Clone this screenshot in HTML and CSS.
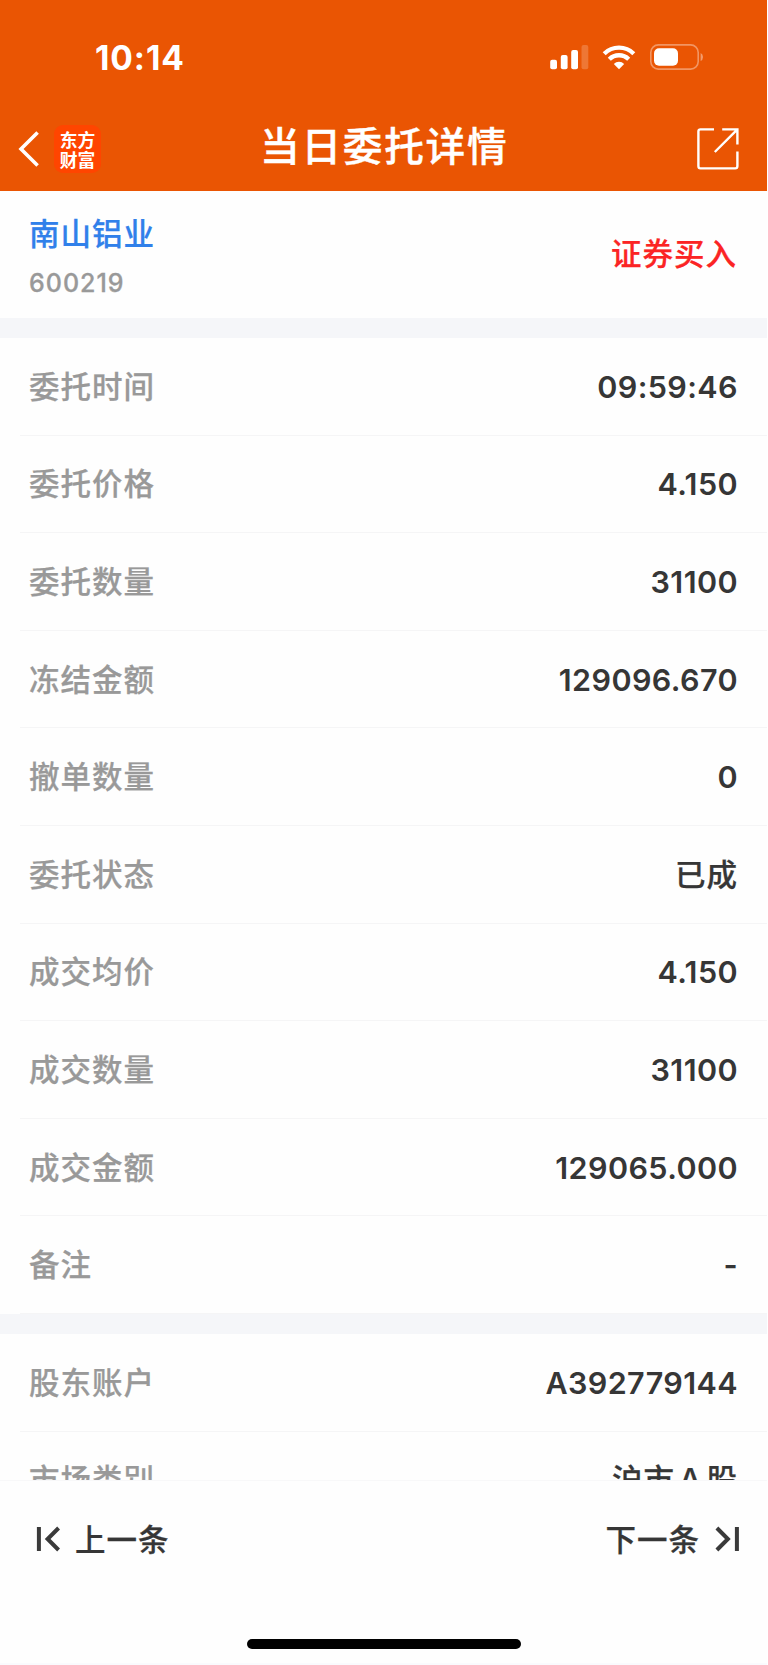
FILE: index.html
```html
<!DOCTYPE html>
<html lang="zh-CN">
<head>
<meta charset="utf-8">
<title>当日委托详情</title>
<link rel="stylesheet" href="styles.css">
</head>
<body>
<div class="app">
  <header class="header">
    <div class="status">
      <span class="clock">10:14</span>
      <svg class="status-icons" width="154" height="26" viewBox="0 0 154 26">
        <g fill="#fff">
          <rect x="0.2" y="15.7" width="6.8" height="9.6" rx="2"/>
          <rect x="10.8" y="11" width="6.8" height="14.3" rx="2"/>
          <rect x="21.2" y="6" width="6.8" height="19.3" rx="2"/>
          <rect x="31.5" y="1" width="6.8" height="24.3" rx="2" opacity=".2"/>
          <path d="M69 25.2 L63.8 20 A7.4 7.4 0 0 1 74.2 20 Z"/>
        </g>
        <path d="M59.3 15.3 A13.7 13.7 0 0 1 78.7 15.3 M54.2 9.7 A21.3 21.3 0 0 1 83.8 9.7" fill="none" stroke="#fff" stroke-width="4.3"/>
        <rect x="100.8" y="0.9" width="47.4" height="24.2" rx="7.6" fill="none" stroke="#fff" stroke-opacity=".38" stroke-width="1.6"/>
        <rect x="104" y="4.2" width="24" height="17.6" rx="5" fill="#fff"/>
        <path d="M150.6 9 Q153 10 153 13 Q153 16 150.6 17 Z" fill="#fff" opacity=".42"/>
      </svg>
    </div>
    <div class="nav">
      <svg class="back" width="22" height="38" viewBox="0 0 22 38"><path d="M19.6 2.5 3 19 19.6 35.6" fill="none" stroke="#fff" stroke-width="3.6"/></svg>
      <div class="logo">东方<br>财富</div>
      <h1 class="title">当日委托详情</h1>
      <svg class="share" width="42" height="42" viewBox="0 0 42 42" fill="none" stroke="#fff" stroke-width="2.4"><path d="M17 1.4H3.4Q1.4 1.4 1.4 3.4V38Q1.4 40.4 3.4 40.4H38.2Q40.4 40.4 40.4 38V23.6M25.2 1.4H40.4V16.6M40.4 1.4 17.8 24"/></svg>
    </div>
  </header>
  <main class="content">
    <section class="stock">
      <div>
        <div class="name">南山铝业</div>
        <div class="code">600219</div>
      </div>
      <div class="side">证券买入</div>
    </section>
    <section class="group">
      <div class="row"><span class="label">委托时间</span><span class="value">09:59:46</span></div>
      <div class="row"><span class="label">委托价格</span><span class="value">4.150</span></div>
      <div class="row"><span class="label">委托数量</span><span class="value">31100</span></div>
      <div class="row"><span class="label">冻结金额</span><span class="value">129096.670</span></div>
      <div class="row"><span class="label">撤单数量</span><span class="value">0</span></div>
      <div class="row"><span class="label">委托状态</span><span class="value cjk">已成</span></div>
      <div class="row"><span class="label">成交均价</span><span class="value">4.150</span></div>
      <div class="row"><span class="label">成交数量</span><span class="value">31100</span></div>
      <div class="row"><span class="label">成交金额</span><span class="value">129065.000</span></div>
      <div class="row"><span class="label">备注</span><span class="value">-</span></div>
    </section>
    <section class="group">
      <div class="row"><span class="label">股东账户</span><span class="value">A392779144</span></div>
      <div class="row"><span class="label">市场类别</span><span class="value cjk">沪市Ａ股</span></div>
    </section>
  </main>
  <footer class="footer">
    <div class="pager">
      <div class="page-btn">
        <svg width="24" height="26" viewBox="0 0 24 26" fill="none" stroke="#3a3a3a" stroke-width="4"><path d="M2.9 1V25M22.6 2 11.6 13 22.6 24"/></svg>
        <span>上一条</span>
      </div>
      <div class="page-btn next">
        <span>下一条</span>
        <svg width="24" height="26" viewBox="0 0 24 26" fill="none" stroke="#3a3a3a" stroke-width="4"><path d="M21.9 1V25M1.9 2 12.9 13 1.9 24"/></svg>
      </div>
    </div>
    <div class="home-bar"></div>
  </footer>
</div>
</body>
</html>
```

FILE: styles.css
```css
* { box-sizing: border-box; }
body {
  margin: 0;
  background: #fff;
  font-family: "Noto Sans CJK SC", sans-serif;
  font-weight: 500;
}
.app {
  width: 767px;
  height: 1665px;
  display: flex;
  flex-direction: column;
  overflow: hidden;
  background: #fefefe;
  border-bottom: 2px solid #fafafd;
}
.header {
  flex: none;
  height: 191px;
  background: #ea5503;
  color: #fff;
}
.status {
  height: 114px;
  padding: 0 63px 0 95px;
  display: flex;
  justify-content: space-between;
  align-items: center;
}
.clock {
  margin-top: 2px;
  font: 700 33.5px/40px Inter, sans-serif;
  letter-spacing: .9px;
}
.status-icons { display: block; }
.nav {
  height: 68px;
  padding: 0 28px 0 18px;
  display: grid;
  grid-template-columns: 36px 206px 1fr 42px;
  align-items: center;
}
.logo {
  width: 47px;
  height: 48px;
  border-radius: 9px;
  background: #ff4500;
  padding-top: 4px;
  text-align: center;
  font: 700 17.8px/20px "Noto Sans CJK SC", sans-serif;
}
.title {
  margin: 0 0 10px;
  font-size: 39.7px;
  line-height: 59px;
  font-weight: 500;
  letter-spacing: 1.7px;
  white-space: nowrap;
  -webkit-text-stroke: .4px currentColor;
}
.content {
  flex: none;
  height: 1290px;
  overflow: hidden;
  border-bottom: 1px solid #f8f8f9;
}
.stock {
  height: 127px;
  padding: 0 29px;
  display: flex;
  justify-content: space-between;
  align-items: center;
}
.name, .side, .label, .value, .page-btn {
  font-size: 30.5px;
  line-height: 44px;
  letter-spacing: 1px;
}
.name, .side, .label, .value.cjk, .page-btn {
  -webkit-text-stroke: .25px currentColor;
}
.name { color: #3080ea; }
.code {
  margin-top: 12px;
  font: 500 25px/34px Inter, sans-serif;
  letter-spacing: 1px;
  color: #999;
  -webkit-text-stroke: .3px currentColor;
}
.side {
  margin: 0 1px 6px 0;
  color: #fb2424;
}
.group {
  border-top: 20px solid #f5f6f9;
}
.row {
  height: 97.6px;
  margin-left: 20px;
  padding: 0 29px 0 9px;
  border-bottom: 1px solid #f5f5f6;
  display: flex;
  justify-content: space-between;
  align-items: center;
}
.label {
  margin-bottom: 3px;
  color: #999;
}
.value {
  margin-top: 1px;
  font-family: Inter, "Noto Sans CJK SC", sans-serif;
  font-weight: 600;
  letter-spacing: .4px;
  color: #363636;
}
.value.cjk {
  margin: 0 0 3px;
  font-family: "Noto Sans CJK SC", sans-serif;
  font-weight: 500;
  letter-spacing: 1px;
}
.footer {
  flex: 1;
  display: flex;
  flex-direction: column;
  align-items: center;
}
.pager {
  align-self: stretch;
  height: 116px;
  padding: 0 28px 0 36px;
  display: flex;
  justify-content: space-between;
  align-items: center;
  color: #363636;
}
.page-btn {
  display: flex;
  align-items: center;
  gap: 15px;
}
.page-btn span { margin-bottom: 3px; }
.home-bar {
  margin-top: 42px;
  width: 274px;
  height: 10px;
  border-radius: 5px;
  background: #000;
}
```
